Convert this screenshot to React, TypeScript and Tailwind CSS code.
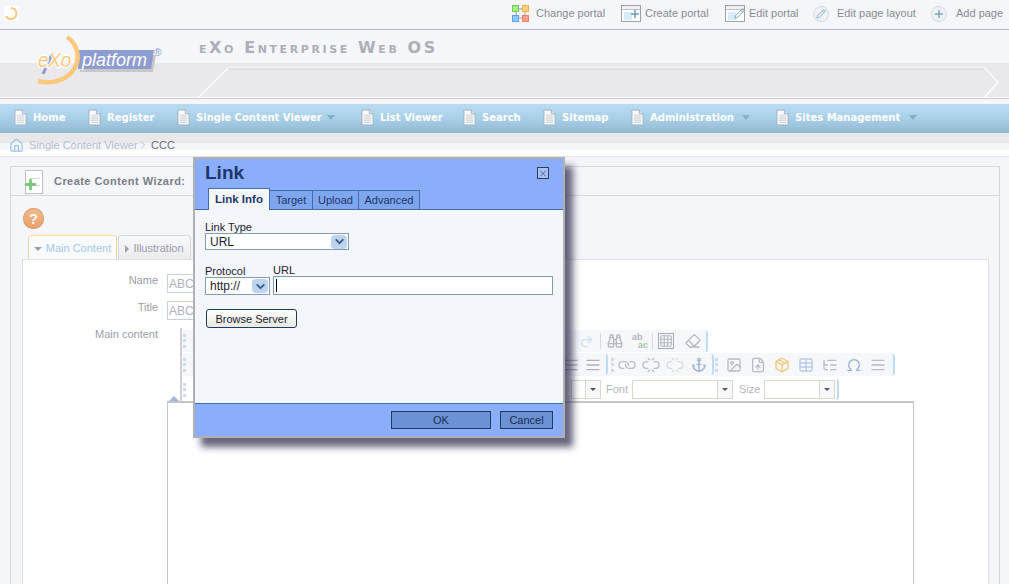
import { Binoculars, Redo2, Grid3x3, Eraser, AlignJustify, Link, Unlink, Anchor, Image, FileUp, Package, Table, Omega, ListTree, Home, Plus, Pencil, X, ChevronDown, ChevronRight } from "lucide-react";

const arial = "font-['Liberation_Sans',Arial,sans-serif]";

function PageIcon() {
    return (
        <svg width="13" height="17" viewBox="0 0 14 17" className="shrink-0">
            <path d="M1 .5h8l4 4v12H1z" fill="#fbfbfb" stroke="#9fb0bd" />
            <path d="M9 .5v4h4" fill="#d5e6f3" stroke="#9fb0bd" />
            <path d="M3 6h8M3 8h8M3 10h8M3 12h8M3 14h8" stroke="#c8ced4" />
        </svg>
    );
}

function NavItem({ label, width, caret }: { label: string; width: string; caret?: boolean }) {
    return (
        <div className="flex items-center">
            <PageIcon />
            <span className={`ml-1.5 ${width} whitespace-nowrap`}>{label}</span>
            {caret && <span className="ml-2 h-0 w-0 border-x-4 border-t-[5px] border-x-transparent border-t-[#7fb0cc]" />}
        </div>
    );
}

function ChangePortalIcon() {
    return (
        <svg width="17" height="17" viewBox="0 0 17 17">
            <path d="M7 4h3M7 13h3M4 7v3M13 7v3" stroke="#9a9a9a" />
            <rect x="0.5" y="0.5" width="6" height="6" fill="#a8ee88" stroke="#75c860" />
            <rect x="10.5" y="0.5" width="6" height="6" fill="#ffd080" stroke="#efb050" />
            <rect x="0.5" y="10.5" width="6" height="6" fill="#90c8ff" stroke="#60a0ef" />
            <rect x="10.5" y="10.5" width="6" height="6" fill="#ff9f88" stroke="#ef7f68" />
        </svg>
    );
}

function PortalIcon({ children }: { children: React.ReactNode }) {
    return (
        <div className="relative h-[17px] w-[20px] border border-[#a0a0a6] bg-white">
            <div className="h-1 border-b border-[#c0c0c6] bg-[#eef2f6]" />
            <div className="absolute left-[2px] top-[6px] h-[8px] w-[8px] bg-[#d8ecf8]" />
            <div className="absolute -right-px top-[2px] text-[#6a9cc0]">{children}</div>
        </div>
    );
}

function RoundIcon({ children }: { children: React.ReactNode }) {
    return (
        <div className="flex h-4 w-4 items-center justify-center rounded-full border border-[#d8d8dc] bg-[#eef1f6] text-[#7fa6c6]">
            {children}
        </div>
    );
}

function Logo() {
    return (
        <svg width="130" height="60" viewBox="0 0 130 60" className="absolute left-[34px] top-[5px] overflow-visible">
            <path d="M46 18 120 18 117 35 44 35z" fill="#c8c8cc" transform="translate(2 2)" />
            <path d="M45 15 120 15 117 34 44 34z" fill="#8e9dcf" />
            <path d="M33 2C45 10 47 26 38 37 29 47 15 49 4 46" fill="none" stroke="#fbc87c" strokeWidth="4.5" />
            <path d="M19 17 9 39" stroke="#8e9dcf" strokeWidth="3" />
            <text x="4" y="32" fontSize="21" fontStyle="italic" fill="#fbc87c" stroke="#fff" strokeWidth="2.5" paintOrder="stroke" textLength="33" lengthAdjust="spacingAndGlyphs" fontFamily="Liberation Sans">eXo</text>
            <text x="48" y="31" fontSize="18" fontStyle="italic" fill="#fff" fontFamily="Liberation Sans">platform</text>
            <text x="120" y="21" fontSize="10" fill="#8e9dcf" fontFamily="Liberation Sans">®</text>
        </svg>
    );
}

function EndCap() {
    return <span className="ml-1 h-[21px] w-[3px] rounded-r-sm border-r-2 border-[#bcdcf4]" />;
}

function Dots() {
    return <span className="h-[14px] w-[3px] border-l-[3px] border-dotted border-[#d0d8ee]" />;
}

function ToolSelect({ width }: { width: string }) {
    return (
        <div className={`flex h-[19px] ${width} items-center justify-end border border-[#d8d8cc] bg-white`}>
            <span className="flex h-full w-[15px] items-center justify-center border-l border-[#d8d8cc] bg-[#f8f8fa]">
                <span className="h-0 w-0 border-x-[3px] border-t-[3px] border-x-transparent border-t-[#555]" />
            </span>
        </div>
    );
}

function SelectArrow() {
    return (
        <span className="flex h-[14px] w-[16px] items-center justify-center rounded-sm bg-[#bcd4f0] text-[#3c5a88]">
            <ChevronDown size={13} strokeWidth={3.5} />
        </span>
    );
}

function LinkDialog() {
    return (
        <div className={`absolute left-[193px] top-[157px] flex h-[281px] w-[372px] flex-col border-[2px] border-[#aeb0b6] bg-[#f4f6fb] shadow-[8px_9px_7px_rgba(50,50,80,0.75)] ${arial}`}>
            <div className="relative h-[51px] border-b border-[#3f6ea8] bg-[#8aaefc]">
                <div className="pl-[10px] pt-[1px] text-[19px] font-bold leading-[26px] text-[#1c3768]">Link</div>
                <span className="absolute left-[342px] top-[8px] flex h-3 w-3 items-center justify-center border border-[#2c3c60] bg-[#a8c0f4] text-[#2c3c60]">
                    <X size={11} strokeWidth={1.5} />
                </span>
                <div className="absolute bottom-[-1px] left-[13px] flex items-end text-[11px] text-[#1c3768]">
                    <div className="flex h-[22px] w-[62px] items-center justify-center border border-b-0 border-[#3f6ea8] bg-[#f4f6fb] text-[11.5px] font-bold">Link Info</div>
                    <div className="flex h-5 w-[43px] items-center justify-center border border-l-0 border-[#3f6ea8] bg-[#7fa5ee]">Target</div>
                    <div className="flex h-5 w-[46px] items-center justify-center border border-l-0 border-[#3f6ea8] bg-[#7fa5ee]">Upload</div>
                    <div className="flex h-5 w-[61px] items-center justify-center border border-l-0 border-[#3f6ea8] bg-[#7fa5ee]">Advanced</div>
                </div>
            </div>

            <div className="flex-1 px-[10px] pt-[11px] text-[11px] leading-[12px] text-[#1c1c30]">
                <div>Link Type</div>
                <div className="flex h-[17px] w-[144px] items-center justify-between border border-[#7f9db9] bg-white pl-[4px] pr-px text-xs">
                    URL
                    <SelectArrow />
                </div>
                <div className="mt-[14px] flex items-end gap-[3px]">
                    <div>
                        <div>Protocol</div>
                        <div className="flex h-[18px] w-[65px] items-center justify-between border border-[#7f9db9] bg-white pl-[4px] pr-px text-xs">
                            http://
                            <SelectArrow />
                        </div>
                    </div>
                    <div>
                        <div>URL</div>
                        <div className="flex h-[19px] w-[280px] items-center border border-[#7f9db9] bg-white pl-[2px]">
                            <span className="h-[13px] w-px bg-black" />
                        </div>
                    </div>
                </div>
                <button className="ml-px mt-[14px] h-[19px] w-[91px] rounded-[3px] border border-[#1c3c60] bg-gradient-to-b from-white to-[#e8e8e0] text-[11px] text-[#1c1c30]">
                    Browse Server
                </button>
            </div>

            <div className="flex h-[33px] justify-end gap-[9px] border-t border-[#3f6ea8] bg-[#8aaefc] pr-[10px] pt-[7px] text-[11px] text-[#1c2c50]">
                <button className="h-[18px] w-[100px] border border-[#1c3c60] bg-[#6a92d4]">OK</button>
                <button className="h-[18px] w-[53px] border border-[#1c3c60] bg-[#6a92d4]">Cancel</button>
            </div>
        </div>
    );
}

export default function App() {
    return (
        <div className={`relative h-[584px] w-[1009px] overflow-hidden bg-[#f4f6fa] ${arial}`}>
            {/* Top bar */}
            <div className="flex h-[30px] items-center border-b border-[#b6b6bc] pb-[2px] pl-[4px] pr-2 text-[11px] text-[#8a8a92]">
                <svg width="15" height="15" viewBox="0 0 15 15" className="bg-white">
                    <path d="M7 2a5.5 5.5 0 1 1-5 8" fill="none" stroke="#fbc87c" strokeWidth="2" />
                </svg>
                <div className="ml-auto flex items-center">
                    <ChangePortalIcon />
                    <span className="ml-[7px] w-[85px]">Change portal</span>
                    <PortalIcon><Plus size={12} strokeWidth={3} /></PortalIcon>
                    <span className="ml-[4px] w-[80px]">Create portal</span>
                    <PortalIcon><Pencil size={11} /></PortalIcon>
                    <span className="ml-[4px] w-[64px]">Edit portal</span>
                    <RoundIcon><Pencil size={10} /></RoundIcon>
                    <span className="ml-[8px] w-[94px]">Edit page layout</span>
                    <RoundIcon><Plus size={12} strokeWidth={3} /></RoundIcon>
                    <span className="ml-[9px] w-[45px] whitespace-nowrap">Add page</span>
                </div>
            </div>

            {/* Banner */}
            <div className="relative h-[69px]">
                <div className="absolute inset-x-0 top-[16px] h-[17px] bg-[radial-gradient(#dcdde2_0.6px,transparent_0.6px)] bg-[length:6px_6px]" />
                <div className="absolute inset-x-0 bottom-[2px] h-[34px] bg-[#e9e9eb] bg-[radial-gradient(#d2d2d6_0.6px,transparent_0.6px)] bg-[length:6px_6px]" />
                <div className="absolute inset-x-0 bottom-0 h-[2px] border-b border-[#c8c8cc] bg-white" />
                <svg width="1009" height="69" viewBox="0 0 1009 69" className="absolute inset-0">
                    <path d="M199 67 228 38H985L998 52 985 67" fill="none" stroke="#fff" strokeWidth="1.2" />
                    <path d="M229 38.8H984" stroke="#d4d4d8" />
                </svg>
                <Logo />
                <div className="absolute left-[199px] top-[8px] whitespace-nowrap font-['DejaVu_Sans',sans-serif] text-[16px] font-bold leading-5 tracking-[2.6px] text-[#aeaeb8] [font-variant:small-caps]">
                    eXo Enterprise Web OS
                </div>
            </div>

            {/* Nav */}
            <div className="mt-[5px] flex h-[29px] items-center gap-[22px] bg-gradient-to-b from-[#b9dcf2] via-[#a9d0e8] to-[#92b9d2] pb-[2px] pl-[14px] font-['DejaVu_Sans',sans-serif] text-[10px] font-bold text-white">
                <NavItem label="Home" width="w-[33px]" />
                <NavItem label="Register" width="w-[48px]" />
                <div className="mr-[4px]"><NavItem label="Single Content Viewer" width="w-[123px]" caret /></div>
                <NavItem label="List Viewer" width="w-[61px]" />
                <NavItem label="Search" width="w-[39px]" />
                <NavItem label="Sitemap" width="w-[47px]" />
                <div className="mr-[4px]"><NavItem label="Administration" width="w-[84px]" caret /></div>
                <NavItem label="Sites Management" width="w-[106px]" caret />
            </div>

            {/* Breadcrumb */}
            <div className="relative h-[17px] bg-[#e8e8ea]">
                <div className="absolute inset-x-0 bottom-0 h-[7px] bg-[#f4f6fa]" />
                <div className="absolute left-[9px] top-[4px] flex items-center text-[11px] leading-4 text-[#b4bccc]">
                    <Home size={15} className="text-[#9cc4e4]" />
                    <span className="ml-[5px] w-[108px] whitespace-nowrap">Single Content Viewer</span>
                    <ChevronRight size={12} strokeWidth={1} className="mr-[2px] text-[#808088]" />
                    <span className="text-[#6c6c78]">CCC</span>
                </div>
            </div>
            <div className="h-[7px] border-b border-[#e6e6ea] bg-white" />

            {/* Wizard panel */}
            <div className="ml-[10px] mr-[9px] mt-[9px] h-[500px] border border-[#d8d8dc]">
                <div className="flex h-[29px] items-center border-b border-[#d8d8dc] pl-[14px] text-[11px] font-bold tracking-[0.45px] text-[#7c7c88]">
                    <div className="relative mt-[1px] h-[24px] w-[18px] border border-[#c0c0c4] bg-white">
                        <span className="absolute right-[2px] top-[7px] h-[8px] w-[10px] border-y border-[#c8e0ee]" />
                        <Plus size={15} strokeWidth={4.5} className="absolute -left-[3px] top-[6px] text-[#78c878]" />
                    </div>
                    <span className="ml-[11px]">Create Content Wizard:</span>
                </div>

                <div className="pl-[11px] pr-[10px]">
                    <div className="ml-[1px] mt-[12px] flex h-[21px] w-[21px] items-center justify-center rounded-full bg-gradient-to-b from-[#f0bc8c] to-[#e8a068] text-sm font-bold text-white shadow-[inset_0_0_0_1px_#d8a078]">?</div>
                    <div className="ml-[6px] mt-[6px] flex h-[24px] items-end text-[11px]">
                        <div className="flex h-[24px] w-[89px] items-center justify-center rounded-t border border-b-0 border-[#e8d8a8] border-t-[#fbdc98] bg-[#f8fafc] pt-[2px] text-[#a4c8e8]">
                            <span className="mr-1 h-0 w-0 border-x-[4px] border-t-[4px] border-x-transparent border-t-[#a0a0a8]" />
                            Main Content
                        </div>
                        <div className="ml-px flex h-[24px] w-[73px] items-center justify-center rounded-t border border-b-0 border-[#d8d8dc] bg-gradient-to-b from-[#f8f9fb] to-[#ebebee] pt-[2px] text-[#9c9ca8]">
                            <span className="mr-1 h-0 w-0 border-y-[4px] border-l-[4px] border-y-transparent border-l-[#a0a0a8]" />
                            Illustration
                        </div>
                    </div>

                    <div className="h-[400px] border border-[#e0e0e4] bg-white pl-[72px] pt-[13px] text-[11px] text-[#9c9ca8]">
                        <div className="flex h-[21px] items-start">
                            <span className="-mt-px w-[63px] text-right leading-4">Name</span>
                            <span className="ml-[9px] mt-px flex h-[19px] w-[100px] items-center border border-[#c8d0e4] pl-px text-xs text-[#b0b0be]">ABCD</span>
                        </div>
                        <div className="mt-[6px] flex h-[21px] items-start">
                            <span className="-mt-px w-[63px] text-right leading-4">Title</span>
                            <span className="ml-[9px] mt-px flex h-[19px] w-[100px] items-center border border-[#c8d0e4] pl-px text-xs text-[#b0b0be]">ABCD</span>
                        </div>

                        <div className="mt-[7px] flex">
                            <span className="-mt-[2px] w-[63px] whitespace-nowrap text-right leading-4">Main content</span>
                            <div className="ml-[9px] h-[270px] w-[747px] text-[#b4bccc]">
                                <div className="relative h-[73px] pl-[14px] pt-[2px]">
                                    <span className="absolute left-[13px] top-0 h-[73px] w-[2px] bg-[#d0d0d4]" />
                                    <span className="absolute left-[2px] top-[68px] h-0 w-0 border-x-[5px] border-b-[5px] border-x-transparent border-b-[#a4b4dc]" />
                                    {/* Toolbar row 1 */}
                                    <div className="flex h-[22px] w-fit items-center bg-[#f5f7fb] pl-[2px]">
                                        <Dots />
                                        <div className="ml-[393px] flex items-center text-[#b4b8c0]">
                                            <Redo2 size={15} className="text-[#cce0f0]" />
                                            <span className="ml-[6px] h-[16px] w-px bg-[#d0dcec]" />
                                            <Binoculars size={16} className="ml-[6px]" />
                                            <span className="ml-[9px] w-[17px] text-[9px] font-bold leading-[8px]">ab<br /><span className="pl-[6px] text-[#a8c8a8]">ac</span></span>
                                            <span className="ml-[3px] h-[16px] w-px bg-[#d0dcec]" />
                                            <Grid3x3 size={16} className="ml-[5px] border border-[#a8a8b0]" />
                                            <Eraser size={16} className="ml-[11px]" />
                                        </div>
                                        <EndCap />
                                    </div>
                                    {/* Toolbar row 2 */}
                                    <div className="mt-px flex h-[23px] w-fit items-center bg-[#f5f7fb] pl-[2px]">
                                        <Dots />
                                        <div className="ml-[377px] flex items-center gap-[6px] text-[#b0b0b8]">
                                            <AlignJustify size={16} />
                                            <AlignJustify size={16} />
                                        </div>
                                        <EndCap />
                                        <span className="ml-[3px] flex"><Dots /></span>
                                        <div className="ml-[5px] flex items-center gap-[8px] text-[#b8bcc8]">
                                            <Link size={16} className="rotate-45" />
                                            <Unlink size={16} className="rotate-45" />
                                            <Unlink size={16} className="rotate-45 text-[#dcdce0]" />
                                            <Anchor size={16} className="text-[#9cb0cc]" />
                                        </div>
                                        <EndCap />
                                        <span className="ml-[1px] flex"><Dots /></span>
                                        <div className="ml-[8px] flex items-center gap-[8px] text-[#b8bcc8]">
                                            <Image size={16} />
                                            <FileUp size={16} />
                                            <Package size={16} className="text-[#eec878]" />
                                            <Table size={16} className="text-[#b8cce4]" />
                                            <ListTree size={16} />
                                            <Omega size={16} className="text-[#9cb4d0]" />
                                            <AlignJustify size={16} />
                                        </div>
                                        <span className="ml-[2px] flex"><EndCap /></span>
                                    </div>
                                    {/* Toolbar row 3 */}
                                    <div className="mt-[2px] flex h-[23px] w-fit items-center pl-[2px]">
                                        <Dots />
                                        <div className="ml-[385px] flex items-center text-[11px] text-[#b4b4bc]">
                                            <ToolSelect width="w-[30px]" />
                                            <span className="ml-[5px] w-[21px]">Font</span>
                                            <span className="ml-[5px]"><ToolSelect width="w-[101px]" /></span>
                                            <span className="ml-[6px] w-[21px]">Size</span>
                                            <span className="ml-[4px]"><ToolSelect width="w-[71px]" /></span>
                                        </div>
                                        <span className="-ml-[3px] flex"><EndCap /></span>
                                    </div>
                                </div>
                                <div className="h-[200px] border border-t-2 border-[#c4c4c8] bg-white" />
                            </div>
                        </div>
                    </div>
                </div>
            </div>

            <LinkDialog />
        </div>
    );
}
